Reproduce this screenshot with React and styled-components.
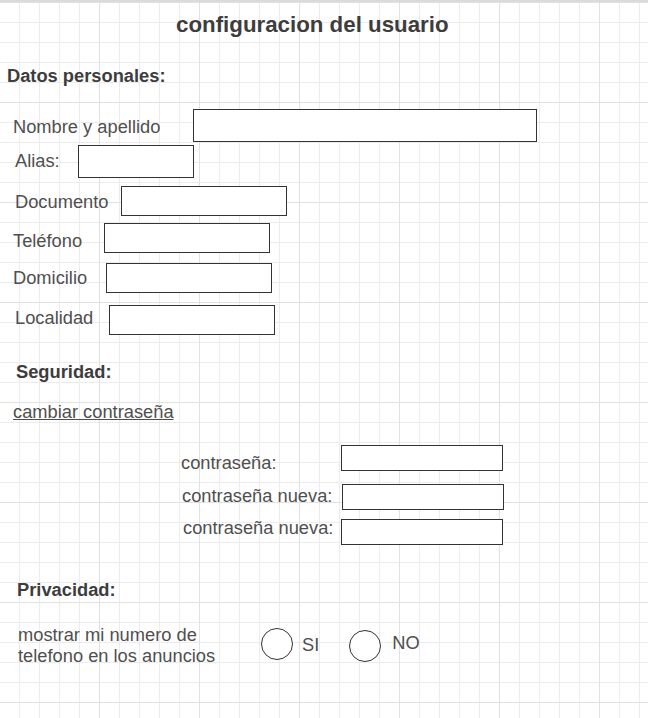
import React from 'react';
import styled, { createGlobalStyle } from 'styled-components';

const GlobalStyle = createGlobalStyle`
  html, body {
    margin: 0;
    padding: 0;
    background: #fff;
  }
  body {
    font-family: "Liberation Sans", Arial, sans-serif;
  }
`;

// draw.io style canvas: 20px minor grid, 100px major grid
const Page = styled.div`
  width: 648px;
  min-height: 716px;
  border-top: 2px solid #dadada;
  background-color: #fff;
  background-image:
    linear-gradient(to right, transparent 99px, #e1e1e1 99px),
    linear-gradient(to bottom, transparent 99px, #e1e1e1 99px),
    linear-gradient(to right, transparent 19px, #ececec 19px),
    linear-gradient(to bottom, transparent 19px, #ececec 19px);
  background-size: 100px 100px, 100px 100px, 20px 20px, 20px 20px;
  background-position: 0 1px, 0 1px, 0 1px, 0 1px;
  color: #4f4f4f;
  font-size: 18.3px;
  line-height: 20px;
  display: flex;
  flex-direction: column;
  overflow: hidden;
`;

const Title = styled.h1`
  margin: 11px 0 0;
  padding-left: 176px;
  font-size: 22.3px;
  line-height: 24px;
  font-weight: bold;
  color: #3d3d3d;
`;

const SectionTitle = styled.h2`
  margin: ${(p) => p.$top}px 0 0;
  padding-left: ${(p) => p.$indent}px;
  font-size: 18.3px;
  line-height: 20px;
  font-weight: bold;
  color: #3d3d3d;
`;

const Row = styled.div`
  display: flex;
  align-items: flex-start;
  margin-top: ${(p) => p.$top}px;
  padding-left: ${(p) => p.$indent}px;
`;

// label is nudged vertically without changing the row height
const Label = styled.label`
  flex: none;
  width: ${(p) => p.$width}px;
  margin-top: ${(p) => p.$dy}px;
  margin-bottom: ${(p) => -p.$dy}px;
  white-space: nowrap;
`;

const Box = styled.input`
  flex: none;
  box-sizing: border-box;
  width: ${(p) => p.$w}px;
  height: ${(p) => p.$h}px;
  margin: 0;
  padding: 0 6px;
  border: 1px solid #333;
  border-radius: 0;
  background: #fff;
  font: inherit;
  outline: none;
`;

const LinkText = styled.a`
  align-self: flex-start;
  margin: 20px 0 0 13px;
  color: #4f4f4f;
  text-decoration: underline;
  cursor: pointer;
`;

const Consent = styled.p`
  flex: none;
  width: 220px;
  margin: 0;
  line-height: 21px;
`;

const Radio = styled.span`
  flex: none;
  box-sizing: border-box;
  width: 32px;
  height: 32px;
  margin-left: ${(p) => p.$gap}px;
  margin-top: ${(p) => p.$dy}px;
  border: 1px solid #333;
  border-radius: 50%;
  background: #fff;
`;

const Option = styled.span`
  margin-left: ${(p) => p.$gap}px;
  margin-top: ${(p) => p.$dy}px;
`;

const personal = [
  { label: 'Nombre y apellido', top: 23, indent: 13, width: 180, dy: 8, w: 344, h: 33 },
  { label: 'Alias:', top: 3, indent: 15, width: 63, dy: 6, w: 116, h: 33 },
  { label: 'Documento', top: 8, indent: 15, width: 106, dy: 6, w: 166, h: 30 },
  { label: 'Teléfono', top: 7, indent: 13, width: 91, dy: 8, w: 166, h: 30 },
  { label: 'Domicilio', top: 10, indent: 13, width: 93, dy: 5, w: 166, h: 30 },
  { label: 'Localidad', top: 12, indent: 15, width: 94, dy: 3, w: 166, h: 30 },
];

const passwords = [
  { label: 'contraseña:', top: 23, indent: 181, width: 160, dy: 8, h: 26 },
  { label: 'contraseña nueva:', top: 13, indent: 182, width: 160, dy: 2, h: 26 },
  { label: 'contraseña nueva:', top: 9, indent: 183, width: 158, dy: -1, h: 26 },
];

export default function App() {
  return (
    <>
      <GlobalStyle />
      <Page>
        <Title>configuracion del usuario</Title>

        <SectionTitle $top={29} $indent={7}>Datos personales:</SectionTitle>
        {personal.map((f) => (
          <Row key={f.label} $top={f.top} $indent={f.indent}>
            <Label $width={f.width} $dy={f.dy}>{f.label}</Label>
            <Box type="text" $w={f.w} $h={f.h} />
          </Row>
        ))}

        <SectionTitle $top={27} $indent={16}>Seguridad:</SectionTitle>
        <LinkText>cambiar contraseña</LinkText>
        {passwords.map((f, i) => (
          <Row key={i} $top={f.top} $indent={f.indent}>
            <Label $width={f.width} $dy={f.dy}>{f.label}</Label>
            <Box type="password" $w={162} $h={f.h} />
          </Row>
        ))}

        <SectionTitle $top={35} $indent={17}>Privacidad:</SectionTitle>
        <Row $top={24} $indent={18}>
          <Consent>mostrar mi numero de telefono en los anuncios</Consent>
          <Radio $gap={23} $dy={4} />
          <Option $gap={9} $dy={11}>SI</Option>
          <Radio $gap={30} $dy={6} />
          <Option $gap={11} $dy={9}>NO</Option>
        </Row>
      </Page>
    </>
  );
}
